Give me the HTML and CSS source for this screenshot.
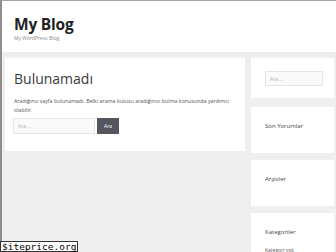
FILE: index.html
```html
<!DOCTYPE html>
<html lang="tr">
<head>
  <meta charset="UTF-8"/>
  <meta name="viewport" content="width=device-width, initial-scale=1.0"/>
  <title>Sayfa bulunamadı – My Blog</title>
  <link rel="stylesheet" href="styles.css">
</head>
<body>
  <div class="site">
    <header class="site-header">
      <p class="site-title">My Blog</p>
      <p class="site-desc">My WordPress Blog</p>
    </header>

    <div class="site-content">
      <main class="content-area">
        <article class="page-card">
          <h1 class="page-title">Bulunamadı</h1>
          <p class="page-text">Aradığınız sayfa bulunamadı. Belki arama kutusu aradığınızı bulma konusunda yardımcı olabilir.</p>
          <form class="search-form">
            <input type="search" class="search-field" placeholder="Ara ...">
            <button type="button" class="search-btn">Ara</button>
          </form>
        </article>
      </main>

      <aside class="sidebar">
        <section class="widget widget-search">
          <input type="search" class="search-field" placeholder="Ara ...">
        </section>
        <section class="widget">
          <h2 class="widget-title">Son Yorumlar</h2>
        </section>
        <section class="widget">
          <h2 class="widget-title">Arşivler</h2>
        </section>
        <section class="widget">
          <h2 class="widget-title">Kategoriler</h2>
          <p class="widget-text">Kategori yok</p>
        </section>
      </aside>
    </div>
  </div>

  <div class="badge">$iteprice.org</div>
</body>
</html>
```

FILE: styles.css
```css
* { box-sizing: border-box; }
html, body { margin: 0; padding: 0; }
body {
  font-family: 'Open Sans', 'Liberation Sans', Arial, sans-serif;
  color: #3a3a3a;
  background: #efefef;
}
p, h1, h2 { margin: 0; }

.site {
  height: 252px;
  overflow: hidden;
  border-top: 1px solid #a3a3a3;
  border-left: 2px solid #8e8e8e;
  background: #efefef;
}

/* HEADER */
.site-header {
  height: 51px;
  background: #fff;
  padding: 13px 0 0 12px;
}
.site-title {
  font-size: 15.5px;
  font-weight: 700;
  line-height: 20px;
  color: #222;
  letter-spacing: -0.2px;
}
.site-desc {
  font-size: 5px;
  line-height: 6px;
  color: #8a8a8a;
  margin-top: 1px;
}

/* İÇERİK */
.site-content {
  display: flex;
  gap: 6px;
  padding: 6px 2px 0 3px;
}
.content-area { flex: 0 0 240px; }
.page-card {
  background: #fff;
  height: 93px;
  padding: 12px 9px 0 9px;
}
.page-title {
  font-size: 14px;
  font-weight: 400;
  line-height: 18px;
  color: #3a3a3a;
}
.page-text {
  font-size: 5.3px;
  line-height: 9px;
  color: #555;
  margin-top: 9px;
  padding-right: 1px;
}
.search-form {
  display: flex;
  gap: 2px;
  margin-top: 3px;
  margin-left: -1px;
}
.search-field {
  display: block;
  width: 82px;
  height: 16px;
  border: 1px solid #e4e4e4;
  background: #fafafa;
  font-family: inherit;
  font-size: 5px;
  color: #666;
  padding: 0 4px;
  outline: none;
}
.search-field::placeholder { color: #b0b0b0; }
.search-btn {
  width: 22px;
  height: 16px;
  border: none;
  background: #55555e;
  color: #fff;
  font-family: inherit;
  font-size: 5px;
  padding: 0;
}

/* YAN MENÜ */
.sidebar {
  flex: 1;
  display: flex;
  flex-direction: column;
  gap: 7px;
}
.widget {
  background: #fff;
  height: 46px;
  padding: 15px 11px 0 14px;
}
.widget-search {
  height: 40px;
  padding-top: 13px;
}
.widget-search .search-field {
  width: 100%;
  height: 15px;
}
.sidebar .widget-search + .widget { margin-top: 2px; }
.widget-title {
  font-size: 6px;
  font-weight: 400;
  line-height: 8px;
  color: #444;
}
.widget-text {
  font-size: 5px;
  line-height: 8px;
  color: #555;
  margin-top: 10px;
}

/* ROZET */
.badge {
  position: absolute;
  left: 0;
  bottom: 0;
  height: 11px;
  background: #fff;
  border: 1px solid #333;
  font-family: 'DejaVu Sans Mono', 'Liberation Mono', monospace;
  font-size: 9.5px;
  line-height: 9px;
  color: #000;
  padding: 0 1px;
  white-space: nowrap;
}
```
